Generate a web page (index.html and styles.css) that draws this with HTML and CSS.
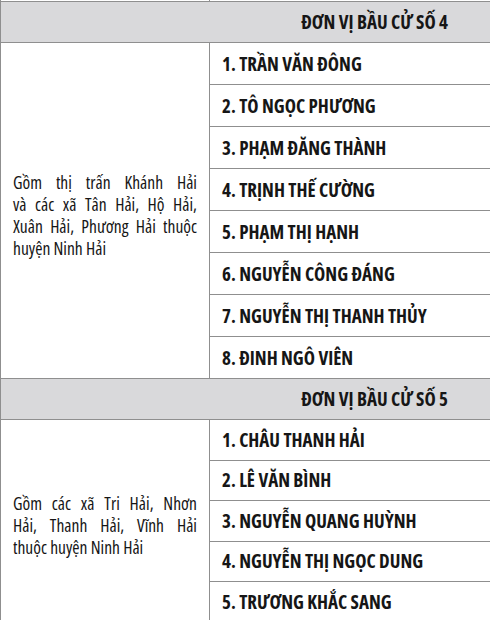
FILE: index.html
```
<!DOCTYPE html>
<html lang="vi">
<head>
<meta charset="utf-8">
<title>Danh sách ứng cử</title>
<link rel="stylesheet" href="styles.css">
</head>
<body>
<table class="ballot">
  <colgroup><col class="c-area"><col class="c-name"></colgroup>
  <tr class="spacer"><td></td><td></td></tr>
  <tr class="head"><td colspan="2">ĐƠN VỊ BẦU CỬ SỐ 4</td></tr>
  <tr class="row r4"><td class="area" rowspan="8"><span class="jl">Gồm thị trấn Khánh Hải</span><span class="jl">và các xã Tân Hải, Hộ Hải,</span><span class="jl">Xuân Hải, Phương Hải thuộc</span><span class="ll">huyện Ninh Hải</span></td><td class="name">1. TRẦN VĂN ĐÔNG</td></tr>
  <tr class="row r4"><td class="name">2. TÔ NGỌC PHƯƠNG</td></tr>
  <tr class="row r4"><td class="name">3. PHẠM ĐĂNG THÀNH</td></tr>
  <tr class="row r4"><td class="name">4. TRỊNH THẾ CƯỜNG</td></tr>
  <tr class="row r4"><td class="name">5. PHẠM THỊ HẠNH</td></tr>
  <tr class="row r4"><td class="name">6. NGUYỄN CÔNG ĐÁNG</td></tr>
  <tr class="row r4"><td class="name">7. NGUYỄN THỊ THANH THỦY</td></tr>
  <tr class="row r4"><td class="name">8. ĐINH NGÔ VIÊN</td></tr>
  <tr class="head"><td colspan="2">ĐƠN VỊ BẦU CỬ SỐ 5</td></tr>
  <tr class="row r5"><td class="area" rowspan="5"><span class="jl">Gồm các xã Tri Hải, Nhơn</span><span class="jl">Hải, Thanh Hải, Vĩnh Hải</span><span class="ll">thuộc huyện Ninh Hải</span></td><td class="name">1. CHÂU THANH HẢI</td></tr>
  <tr class="row r5"><td class="name">2. LÊ VĂN BÌNH</td></tr>
  <tr class="row r5"><td class="name">3. NGUYỄN QUANG HUỲNH</td></tr>
  <tr class="row r5"><td class="name">4. NGUYỄN THỊ NGỌC DUNG</td></tr>
  <tr class="row r5"><td class="name">5. TRƯƠNG KHẮC SANG</td></tr>
</table>
</body>
</html>
```
FILE: styles.css
```
html, body {
  margin: 0;
  padding: 0;
  background: #ffffff;
}

.ballot {
  border-collapse: collapse;
  table-layout: fixed;
  width: 490px;
  font-family: "Open Sans", sans-serif;
  font-stretch: 75%;
  color: #161616;
}

.c-area { width: 209px; }
.c-name { width: 281px; }

.ballot td {
  border: 1.5px solid #8f8f8f;
  padding: 0;
}

.ballot .spacer td {
  height: 1px;
  border-top: none;
}

.ballot .head td {
  height: 40px;
  background: #d9d9db;
  font-weight: bold;
  font-size: 19px;
  text-align: right;
  padding-right: 42px;
}

.ballot .r4 td.name { height: 41px; }
.ballot .r5 td.name { height: 39.5px; }

.ballot .name {
  font-weight: bold;
  font-size: 19px;
  padding-left: 12px;
  white-space: nowrap;
}

.ballot .area {
  font-size: 17.5px;
  line-height: 22px;
  vertical-align: middle;
  padding: 8px 12px 0 12px;
}

.jl {
  display: block;
  text-align: justify;
  text-align-last: justify;
}

.ll {
  display: block;
  text-align: left;
}
```
